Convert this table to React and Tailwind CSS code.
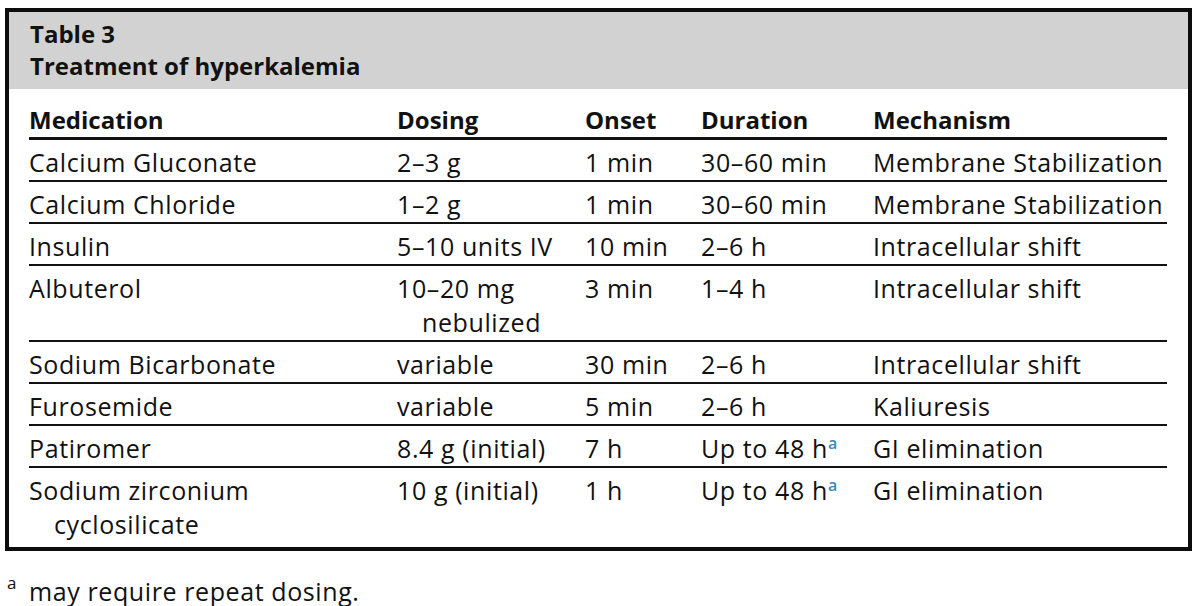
const rows = [
  { med: ["Calcium Gluconate"], dose: ["2–3 g"], onset: "1 min", dur: "30–60 min", mech: "Membrane Stabilization" },
  { med: ["Calcium Chloride"], dose: ["1–2 g"], onset: "1 min", dur: "30–60 min", mech: "Membrane Stabilization" },
  { med: ["Insulin"], dose: ["5–10 units IV"], onset: "10 min", dur: "2–6 h", mech: "Intracellular shift" },
  { med: ["Albuterol"], dose: ["10–20 mg", "nebulized"], onset: "3 min", dur: "1–4 h", mech: "Intracellular shift" },
  { med: ["Sodium Bicarbonate"], dose: ["variable"], onset: "30 min", dur: "2–6 h", mech: "Intracellular shift" },
  { med: ["Furosemide"], dose: ["variable"], onset: "5 min", dur: "2–6 h", mech: "Kaliuresis" },
  { med: ["Patiromer"], dose: ["8.4 g (initial)"], onset: "7 h", dur: "Up to 48 h", sup: true, mech: "GI elimination" },
  { med: ["Sodium zirconium", "cyclosilicate"], dose: ["10 g (initial)"], onset: "1 h", dur: "Up to 48 h", sup: true, mech: "GI elimination" },
];

function Lines({ parts }) {
  return parts.map((p, i) => (
    <div key={i} className={i > 0 ? "pl-[25px]" : ""}>
      {p}
    </div>
  ));
}

// footnote mark, teal like the print original
function Sup() {
  return (
    <span className="inline-block align-top text-[16px] leading-[24px] font-semibold text-[#3a8cb4] tracking-normal">
      a
    </span>
  );
}

export default function App() {
  return (
    <div className="w-[1200px] h-[606px] bg-white text-[#111] font-['Open_Sans','Noto_Sans',sans-serif] text-[25px] tracking-[0.6px] leading-[34px]">
      <div className="ml-[5px] mt-[8px] w-[1187px] border-4 border-[#0c0c0c]">
        <div className="bg-[#d2d2d2] pl-[21px] pt-[6px] pb-[7px] font-bold text-[24px] tracking-normal leading-[32px]">
          <div>Table 3</div>
          <div>Treatment of hyperkalemia</div>
        </div>

        <div className="pl-[20px] pr-[21px] pb-[5px]">
          <div className="flex pt-[15px] pb-[1px] border-b-[3px] border-[#111] font-bold text-[24px] tracking-normal leading-[32px]">
            <div className="w-[368px]">Medication</div>
            <div className="w-[188px]">Dosing</div>
            <div className="w-[116px]">Onset</div>
            <div className="w-[172px]">Duration</div>
            <div className="flex-1">Mechanism</div>
          </div>

          {rows.map((r, i) => (
            <div
              key={i}
              className={
                "flex pt-[5px] pb-[1px] " +
                (i < rows.length - 1 ? "border-b-2 border-[#111]" : "")
              }
            >
              <div className="w-[368px]">
                <Lines parts={r.med} />
              </div>
              <div className="w-[188px]">
                <Lines parts={r.dose} />
              </div>
              <div className="w-[116px]">{r.onset}</div>
              <div className="w-[172px] whitespace-nowrap">
                {r.dur}
                {r.sup && <Sup />}
              </div>
              <div className="flex-1 whitespace-nowrap">{r.mech}</div>
            </div>
          ))}
        </div>
      </div>

      <div className="flex mt-[23px] ml-[7px]">
        <span className="text-[17px] leading-[16px] w-[22px] pt-[1px] tracking-normal">a</span>
        <span>may require repeat dosing.</span>
      </div>
    </div>
  );
}
